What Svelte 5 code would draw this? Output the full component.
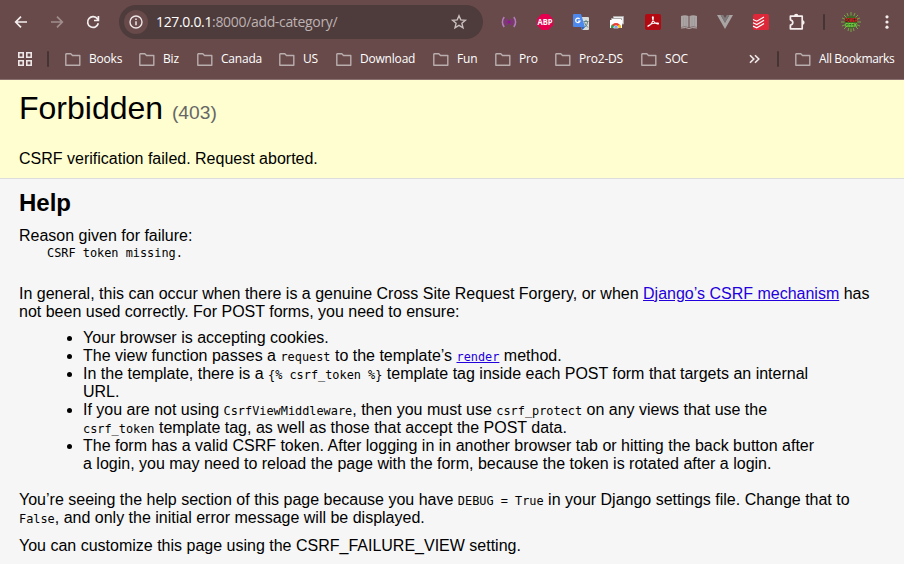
<script>
  const bookmarks = [
    { name: 'Books', width: 74 },
    { name: 'Biz', width: 58 },
    { name: 'Canada', width: 82 },
    { name: 'US', width: 57 },
    { name: 'Download', width: 97 },
    { name: 'Fun', width: 62 },
    { name: 'Pro', width: 60 },
    { name: 'Pro2-DS', width: 86 },
    { name: 'SOC', width: 100 }
  ];
</script>

{#snippet folder()}
  <svg class="folder" width="16" height="13" viewBox="0 0 16 13">
    <path d="M1.2.8h4.6l1.7 1.7h7.3v9.700H.8V1.200Z" fill="none" stroke="#b9adad" stroke-width="1.400" stroke-linejoin="round" />
  </svg>
{/snippet}

<div class="window">
  <header class="chrome">
    <div class="toolbar">
      <nav class="nav">
        <span class="cell"><svg width="14" height="14" viewBox="0 0 14 14"><path d="M13 7H2M7 1.700 1.700 7 7 12.300" fill="none" stroke="#f4eeee" stroke-width="1.700" /></svg></span>
        <span class="cell"><svg width="14" height="14" viewBox="0 0 14 14"><path d="M1 7h11M7 1.700 12.300 7 7 12.300" fill="none" stroke="#a18d8d" stroke-width="1.700" /></svg></span>
        <span class="cell"><svg width="14" height="14" viewBox="0 0 14 14"><path d="M12.300 8.200A5.400 5.400 0 1 1 11.500 4L12.500 5.300M12.400 1v4.500H8" fill="none" stroke="#f4eeee" stroke-width="1.700" /></svg></span>
      </nav>
      <div class="omnibox">
        <span class="info-btn"><svg width="14" height="14" viewBox="0 0 14 14"><circle cx="7" cy="7" r="6" fill="none" stroke="#eee6e6" stroke-width="1.400" /><path d="M7 6.200v4M7 3.500v1.500" stroke="#eee6e6" stroke-width="1.500" /></svg></span>
        <span class="url"><b>127.0.0.1</b>:8000/add-category/</span>
        <svg class="star" width="16" height="16" viewBox="0 0 16 16"><path d="m8 1.700 1.800 4.200 4.600.4-3.500 3 1.100 4.500L8 11.400l-4 2.400 1.100-4.500-3.500-3 4.600-.4Z" fill="none" stroke="#c9bfbf" stroke-width="1.400" /></svg>
      </div>
      <div class="extensions">
        <span class="cell"><svg width="16" height="16" viewBox="0 0 16 16" fill="none" stroke-width="1.500"><path d="M3.200 3Q-.4 8 3.200 13M12.800 3Q16.400 8 12.800 13" stroke="#b77bc4" /><path d="M5.800 5Q3.800 8 5.800 11M10.200 5Q12.200 8 10.200 11" stroke="#9621a6" /><circle cx="8" cy="8" r="1.500" fill="#8e129c" /></svg></span>
        <span class="cell"><svg width="16" height="16" viewBox="0 0 16 16"><path d="M4.700 0h6.600L16 4.700v6.600L11.300 16H4.700L0 11.300V4.700Z" fill="#e4004f" /><text x="8" y="11" text-anchor="middle" textLength="15" lengthAdjust="spacingAndGlyphs" class="abp">ABP</text></svg></span>
        <span class="cell"><svg width="16" height="16" viewBox="0 0 16 16"><path d="M6 3h9q1 0 1 1v11q0 1-1 1H9Z" fill="#d8dcda" /><path d="M1 0h7l4 13H1q-1 0-1-1V1q0-1 1-1Z" fill="#4d88ec" /><path d="m8 13h4l-2.500 3Z" fill="#2c62c4" /><path d="M10.500 7.500h5M13 6v1.500M11.500 13.500q3-2 3.200-6M11.500 8.500q1 3 3.500 5" fill="none" stroke="#668482" /><path d="M6.600 5a2.200 2.200 0 1 0 .4 2H5.100" fill="none" stroke="#fff" stroke-width="1.200" /></svg></span>
        <span class="cell"><svg width="16" height="16" viewBox="0 0 16 16"><path d="M4.500 2.500h10V10h-10Z" fill="#eee" stroke="#b0aaaa" /><path d="M2.500 4.500h10V12h-10Z" fill="#fff" stroke="#aaa" /><path d="M1 6h12v8H1Z" fill="#fff" /><path d="M2 14a5 5 0 0 1 10 0Z" fill="#e94235" /><path d="M2 14q0-2.500 1-3.800L6.500 14Z" fill="#2ca54c" /><path d="m7.500 14 2-3h1.800q.7 1.200.7 3Z" fill="#fbbd09" /><path d="M4.700 14a2.300 2.300 0 0 1 4.600 0Z" fill="#4385ed" stroke="#fff" stroke-width=".7" /></svg></span>
        <span class="cell"><svg width="16" height="16" viewBox="0 0 16 16"><rect width="16" height="16" rx="2" fill="#b20912" /><path d="M3.200 12.200C6 11 8.600 7.500 8.300 3.400c-.1-.9-1-.7-.9.200.4 3.400 2.300 5.800 5.200 6.400 1.200.2 1.200-.9.200-1-3-.3-6.500.7-9.200 2.400-.8.500-1 .9-.4.800Z" fill="none" stroke="#fff" stroke-width="1.100" /></svg></span>
        <span class="cell"><svg width="16" height="16" viewBox="0 0 16 16"><path d="M0 2Q4 .5 7.500 2v11Q4 12 0 13ZM8.500 2Q12 .5 16 2v11q-4-1-7.500 0Z" fill="#aaa5a4" /><path d="M2.500 3v9M5 3v9M11 3v9M13.500 3v9" stroke="#979190" stroke-width=".5" /><path d="M0 14q5-1 8 .4 3-1.400 8-.4" fill="none" stroke="#b9b4b2" /></svg></span>
        <span class="cell"><svg width="16" height="16" viewBox="0 0 16 16"><path d="M0 1h3.600L8 8.800 12.400 1H16L8 15Z" fill="#aaa5a4" /><path d="M3.600 1h2.700L8 3.900 9.700 1h2.700L8 8.800Z" fill="#7e7b7c" /></svg></span>
        <span class="cell"><svg width="16" height="16" viewBox="0 0 16 16"><rect width="16" height="16" rx="1.500" fill="#dc2838" /><path d="m0 5.500 3.800 1.700L11 3M0 8.800l3.800 1.700L11 6.300M0 12.100l3.800 1.700L11 9.600" fill="none" stroke="#fff" stroke-width="1.200" /></svg></span>
        <span class="cell"><svg width="18" height="18" viewBox="0 0 18 18"><path d="M2.400 3.200H14.200V15.800H2.400V12.200C5.600 11.600 5.600 7.400 2.400 6.800Z" fill="none" stroke="#f5eeee" stroke-width="1.700" stroke-linejoin="round" /><path d="M6 3a2.200 2.200 0 0 1 4.400 0ZM14.400 7.300a2.200 2.200 0 0 1 0 4.400Z" fill="#f5eeee" /></svg></span>
      </div>
      <span class="divider-cell"><i class="divider"></i></span>
      <span class="cell"><svg width="20" height="20" viewBox="0 0 20 20"><path d="M10 0v20M0 10h20M3 3l14 14M17 3 3 17M6 1l2 5M14 1l-2 5M7 19l1-4M13 19l-1-4M1 6l5 2M19 6l-5 2M1 14l5-2M19 14l-5-2" stroke="#76a545" stroke-width="1" /><circle cx="10" cy="10" r="6.500" fill="#3f6826" /><path d="M4 6h12v4H4Z" fill="#2e1d17" /><text x="10" y="9.600" text-anchor="middle" textLength="12" lengthAdjust="spacingAndGlyphs" class="power">POWER</text><text x="10" y="14.500" text-anchor="middle" textLength="12" lengthAdjust="spacingAndGlyphs" class="geek">GEEK</text></svg></span>
      <span class="cell last"><svg width="4" height="16" viewBox="0 0 4 16" fill="#f3eded"><circle cx="2" cy="2.800" r="1.600" /><circle cx="2" cy="8" r="1.600" /><circle cx="2" cy="13.200" r="1.600" /></svg></span>
    </div>

    <div class="bookmark-bar">
      <svg class="apps" width="14" height="14" viewBox="0 0 14 14" fill="none" stroke="#eee7e7" stroke-width="1.600"><path d="M.8.8h4.400v4.400H.8ZM8.800.8h4.400v4.400H8.800ZM.8 8.800h4.400v4.400H.8ZM8.800 8.800h4.400v4.400H8.800Z" /></svg>
      <i class="divider first"></i>
      {#each bookmarks as item}
        <span class="bookmark" style="width: {item.width}px">{@render folder()}<span>{item.name}</span></span>
      {/each}
      <svg class="more" width="12" height="10" viewBox="0 0 12 10"><path d="m1 1.200 3.800 3.800L1 8.800M6 1.200l3.800 3.800L6 8.800" fill="none" stroke="#f1eaea" stroke-width="1.600" /></svg>
      <i class="divider second"></i>
      <span class="bookmark all">{@render folder()}<span>All Bookmarks</span></span>
    </div>
  </header>

  <main>
    <section class="summary">
      <h1>Forbidden <span>(403)</span></h1>
      <p>CSRF verification failed. Request aborted.</p>
    </section>
    <section class="info">
      <h2>Help</h2>
      <p>Reason given for failure:</p>
      <pre>CSRF token missing.</pre>
      <p>In general, this can occur when there is a genuine Cross Site Request Forgery, or when <a href="#csrf">Django’s CSRF mechanism</a> has not been used correctly. For POST forms, you need to ensure:</p>
      <ul>
        <li>Your browser is accepting cookies.</li>
        <li>The view function passes a <code>request</code> to the template’s <a href="#render"><code>render</code></a> method.</li>
        <li>In the template, there is a <code>{'{% csrf_token %}'}</code> template tag inside each POST form that targets an internal URL.</li>
        <li>If you are not using <code>CsrfViewMiddleware</code>, then you must use <code>csrf_protect</code> on any views that use the <code>csrf_token</code> template tag, as well as those that accept the POST data.</li>
        <li>The form has a valid CSRF token. After logging in in another browser tab or hitting the back button after a login, you may need to reload the page with the form, because the token is rotated after a login.</li>
      </ul>
      <p>You’re seeing the help section of this page because you have <code>DEBUG = True</code> in your Django settings file. Change that to <code>False</code>, and only the initial error message will be displayed.</p>
      <p>You can customize this page using the CSRF_FAILURE_VIEW setting.</p>
    </section>
  </main>
</div>

<style>
  :global(body) { margin: 0; overflow: hidden; }
  .window { width: 904px; height: 564px; overflow: hidden; display: flex; flex-direction: column; background: #f6f6f6; }
  svg { display: block; flex: none; overflow: visible; }

  .chrome { height: 80px; box-sizing: border-box; flex: none; background: #684a4a; border-bottom: 1px solid #8a7070; font-family: "Open Sans", "Noto Sans", sans-serif; }
  .toolbar { display: flex; align-items: center; height: 44px; }
  .nav { display: flex; padding-left: 3px; width: 116px; }
  .cell { display: flex; width: 36px; height: 34px; align-items: center; justify-content: center; flex: none; }
  .last { width: 35px; }
  .omnibox { display: flex; align-items: center; width: 364px; height: 34px; border-radius: 17px; background: #4e3b3b; box-sizing: border-box; padding: 0 16px 0 5px; margin-right: 8px; flex: none; }
  .info-btn { display: flex; align-items: center; justify-content: center; width: 24px; height: 24px; border-radius: 12px; background: #684a4a; }
  .url { margin-left: 8px; font-size: 14px; line-height: 20px; letter-spacing: -.33px; color: #bdb2b2; white-space: nowrap; }
  .url b { color: #fff; font-weight: 400; }
  .star { margin-left: auto; }
  .extensions { display: flex; }
  .divider { display: block; width: 2px; height: 16px; border-radius: 1px; background: #453434; flex: none; }
  .divider-cell { width: 18px; display: flex; justify-content: center; flex: none; }
  .abp { font: bold 8px "Open Sans", sans-serif; fill: #fff; }
  .power { font: bold 4.500px "Liberation Sans", sans-serif; fill: #ef3028; }
  .geek { font: bold 6px "Liberation Sans", sans-serif; fill: #7fe04c; }

  .bookmark-bar { display: flex; align-items: center; height: 30px; padding-left: 18px; }
  .first { margin: 0 16px 0 15px; }
  .bookmark { display: flex; align-items: center; flex: none; gap: 8px; color: #fff; font-size: 12px; line-height: 16px; letter-spacing: -.2px; white-space: nowrap; }
  .all { letter-spacing: -.35px; }
  .more { margin-left: 8px; }
  .second { margin: 0 16px; }

  main { font: 16px/18px "Liberation Sans", Arial, sans-serif; color: #000; flex: 1; }
  h1, h2, p, pre, ul { margin: 0; padding: 0; }
  .summary { height: 99px; box-sizing: border-box; padding: 10px 19px; background: #fefed0; border-bottom: 1px solid #ddd; }
  h1 { font-size: 32px; line-height: 37px; font-weight: 400; margin-bottom: 13px; }
  h1 span { font-size: 19.200px; color: #666; }
  p { padding-top: 10px; }
  .summary p { padding-top: 6px; }
  .info { padding: 10px 20px 0 19px; background: #f6f6f6; }
  h2 { font-size: 24px; line-height: 27px; margin-bottom: 1px; }
  pre, code { font-family: "DejaVu Sans Mono", monospace; font-size: 11.880px; }
  pre { line-height: 16px; padding-left: 28px; margin-bottom: 14px; }
  code { line-height: 1; }
  ul { width: 741px; padding: 8px 0 8px 64px; }
  a { color: #2200dd; }
</style>
